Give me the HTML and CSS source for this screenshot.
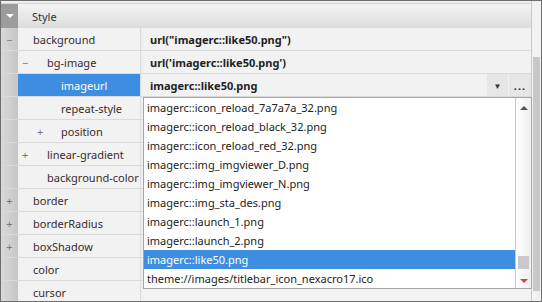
FILE: index.html
```html
<!DOCTYPE html>
<html>
<head>
    <title>Style Properties</title>
    <link rel="stylesheet" href="styles.css">
</head>
<body>
    <div class="panel">
        <div class="grid">
            <div class="header">
                <div class="gutter head-gutter"><span class="caret"></span></div>
                <div class="head-title">Style</div>
            </div>

            <div class="row">
                <div class="gutter">&minus;</div>
                <div class="name lv0">background</div>
                <div class="value bold">url("imagerc::like50.png")</div>
            </div>
            <div class="row">
                <div class="gutter"></div>
                <div class="name lv1"><span class="tog">&minus;</span>bg-image</div>
                <div class="value bold">url('imagerc::like50.png')</div>
            </div>
            <div class="row">
                <div class="gutter"></div>
                <div class="name lv2 selected">imageurl</div>
                <div class="value bold editing">
                    <span class="edit-text">imagerc::like50.png</span>
                    <span class="btn drop">&#9660;</span>
                    <span class="btn dots">...</span>
                </div>
            </div>
            <div class="row">
                <div class="gutter"></div>
                <div class="name lv2">repeat-style</div>
                <div class="value"></div>
            </div>
            <div class="row">
                <div class="gutter"></div>
                <div class="name lv2"><span class="tog">+</span>position</div>
                <div class="value"></div>
            </div>
            <div class="row">
                <div class="gutter"></div>
                <div class="name lv1"><span class="tog">+</span>linear-gradient</div>
                <div class="value"></div>
            </div>
            <div class="row">
                <div class="gutter"></div>
                <div class="name lv1 plain">background-color</div>
                <div class="value"></div>
            </div>
            <div class="row">
                <div class="gutter">+</div>
                <div class="name lv0">border</div>
                <div class="value"></div>
            </div>
            <div class="row">
                <div class="gutter">+</div>
                <div class="name lv0">borderRadius</div>
                <div class="value"></div>
            </div>
            <div class="row">
                <div class="gutter">+</div>
                <div class="name lv0">boxShadow</div>
                <div class="value"></div>
            </div>
            <div class="row">
                <div class="gutter"></div>
                <div class="name lv0">color</div>
                <div class="value"></div>
            </div>
            <div class="row">
                <div class="gutter"></div>
                <div class="name lv0">cursor</div>
                <div class="value"></div>
            </div>
        </div>

        <div class="vscroll">
            <div class="vthumb"></div>
        </div>

        <!-- combo list opened over the grid -->
        <div class="combo-list">
            <ul class="items">
                <li>imagerc::icon_reload_7a7a7a_32.png</li>
                <li>imagerc::icon_reload_black_32.png</li>
                <li>imagerc::icon_reload_red_32.png</li>
                <li>imagerc::img_imgviewer_D.png</li>
                <li>imagerc::img_imgviewer_N.png</li>
                <li>imagerc::img_sta_des.png</li>
                <li>imagerc::launch_1.png</li>
                <li>imagerc::launch_2.png</li>
                <li class="active">imagerc::like50.png</li>
                <li>theme://images/titlebar_icon_nexacro17.ico</li>
            </ul>
            <div class="list-scroll">
                <span class="arrow up"></span>
                <span class="list-thumb"></span>
                <span class="arrow down"></span>
            </div>
        </div>
    </div>
</body>
</html>
```

FILE: styles.css
```css
* {
    box-sizing: border-box;
}

body {
    margin: 0;
    font-family: "Noto Sans", "Liberation Sans", sans-serif;
    font-size: 11px;
    color: #222;
    background-color: #ffffff;
}

.panel {
    position: relative;
    display: flex;
    width: 542px;
    height: 302px;
    border: 1px solid #6e6e6e;
    background-color: #f0f0f0;
    overflow: hidden;
}

.grid {
    flex: 1;
    display: flex;
    flex-direction: column;
    padding-top: 2px;
    border-right: 1px solid #c9c9c9;
    overflow: hidden;
}

.header {
    display: flex;
    height: 25px;
    flex-shrink: 0;
    border-top: 1px solid #d5d5d5;
}

.head-gutter {
    background: #9c9c9c !important;
    display: flex;
    align-items: center;
    justify-content: center;
}

.caret {
    width: 0;
    height: 0;
    border-left: 4px solid transparent;
    border-right: 4px solid transparent;
    border-top: 4px solid #ffffff;
}

.head-title {
    flex: 1;
    display: flex;
    align-items: center;
    padding-left: 14px;
    background: linear-gradient(#f4f4f4, #dcdcdc);
    color: #333;
}

.row {
    display: flex;
    height: 23px;
    flex-shrink: 0;
    border-bottom: 1px solid #dadada;
}

.gutter {
    width: 17px;
    flex-shrink: 0;
    background: linear-gradient(to right, #d9d9d9, #c6c6c6);
    color: #777;
    display: flex;
    align-items: center;
    justify-content: center;
    line-height: 1;
}

.name {
    width: 123px;
    flex-shrink: 0;
    display: flex;
    align-items: center;
    white-space: nowrap;
    overflow: hidden;
    border-right: 1px solid #dadada;
    background-color: #f2f2f2;
    color: #3a2c2c;
}

.lv0 { padding-left: 15px; }
.lv1 { padding-left: 4px; }
.lv2 { padding-left: 43px; }
.lv1.plain { padding-left: 29px; }

.tog {
    width: 25px;
    flex-shrink: 0;
    color: #777;
}

.lv2 .tog {
    margin-left: -24px;
    width: 20px;
    padding-left: 0;
    margin-right: 4px;
}

.selected {
    background-color: #3d8ee0;
    color: #ffffff;
}

.value {
    flex: 1;
    display: flex;
    align-items: center;
    margin-left: 2px;
    padding-left: 7px;
    background-color: #f2f2f2;
    white-space: nowrap;
}

.bold {
    font-weight: bold;
    color: #222;
}

.edit-text {
    flex: 1;
}

.btn {
    width: 21px;
    height: 22px;
    display: flex;
    align-items: center;
    justify-content: center;
    background-color: #e6e6e6;
    color: #333;
    font-size: 8px;
    margin-left: 1px;
}

.btn.dots {
    width: 22px;
    font-size: 11px;
    letter-spacing: 1px;
}

.vscroll {
    width: 9px;
    background-color: #f2f2f2;
    padding-top: 56px;
}

.vthumb {
    margin-left: 1px;
    width: 7px;
    height: 234px;
    background-color: #c8c8c8;
}

.combo-list {
    position: absolute;
    left: 142px;
    top: 96px;
    width: 389px;
    height: 192px;
    display: flex;
    border: 1px solid #a5a5a5;
    background-color: #ffffff;
}

.items {
    flex: 1;
    list-style-type: none;
    margin: 0;
    padding: 0;
}

.items li {
    height: 19px;
    line-height: 19px;
    padding-left: 3px;
    color: #222;
    white-space: nowrap;
}

.items li.active {
    background-color: #3d8ee0;
    color: #ffffff;
}

.list-scroll {
    width: 16px;
    border-left: 1px solid #c9c9c9;
    background: linear-gradient(to right, #ffffff, #efefef);
    display: flex;
    flex-direction: column;
    align-items: center;
    padding-top: 8px;
}

.arrow {
    width: 0;
    height: 0;
    border-left: 4px solid transparent;
    border-right: 4px solid transparent;
}

.arrow.up {
    border-bottom: 4px solid #555;
}

.arrow.down {
    border-top: 4px solid #e0403a;
    margin-top: 10px;
}

.list-thumb {
    width: 11px;
    height: 13px;
    margin-top: 146px;
    background-color: #c8c8c8;
}
```
